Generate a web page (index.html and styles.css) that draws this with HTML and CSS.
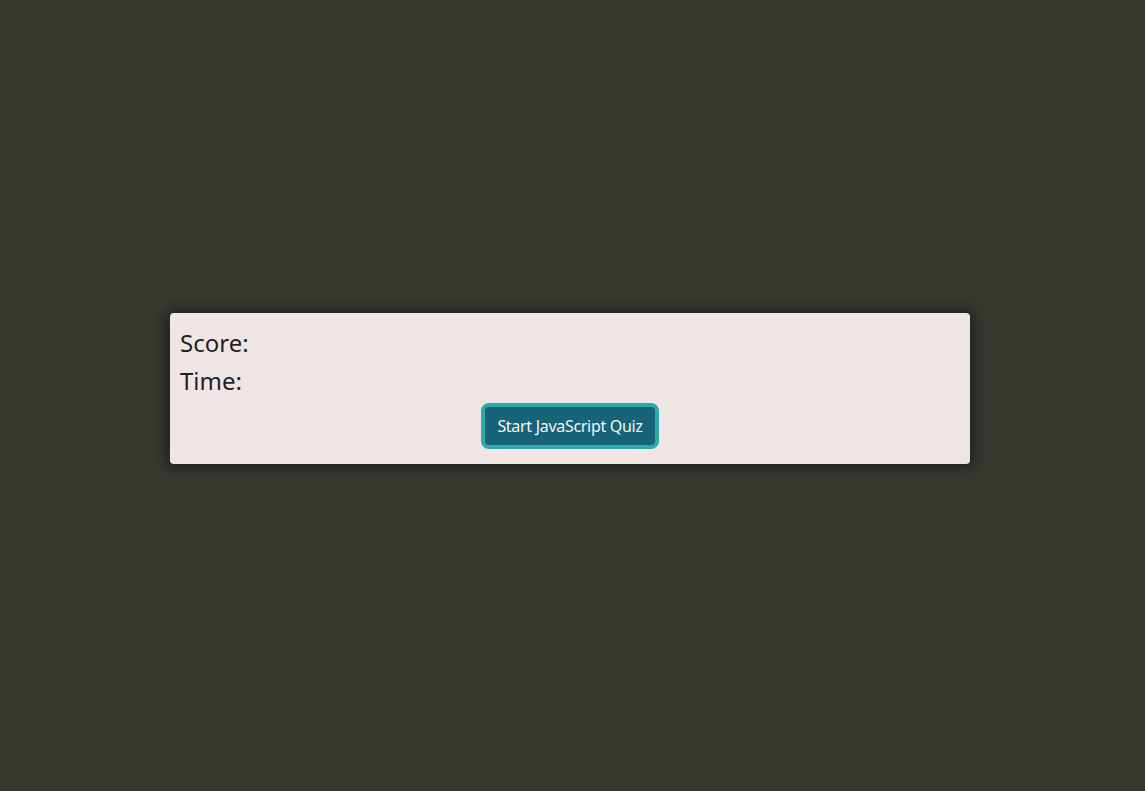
FILE: index.html
```html
<!DOCTYPE html>
<html lang="en">
<head>
<meta charset="utf-8">
<title>JavaScript Quiz</title>
<link rel="stylesheet" href="styles.css">
</head>
<body>
<main class="page">
  <section class="card">
    <div class="stat">Score: <span class="value"></span></div>
    <div class="stat">Time: <span class="value"></span></div>
    <div class="actions">
      <button class="start-btn" type="button">Start JavaScript Quiz</button>
    </div>
  </section>
</main>
</body>
</html>
```

FILE: styles.css
```css
html, body {
  margin: 0;
  padding: 0;
  height: 100%;
}

body {
  background: #373830;
  font-family: "Noto Sans", "Open Sans", sans-serif;
  color: #1f1f24;
}

.page {
  display: flex;
  justify-content: center;
  padding-top: 313px;
  padding-right: 5px;
}

.card {
  width: 800px;
  box-sizing: border-box;
  background: #efe5e4;
  border-radius: 4px;
  box-shadow: 0 0 14px 3px rgba(20, 22, 20, 0.75);
  padding: 11px 10px 15px;
  display: flex;
  flex-direction: column;
}

.stat {
  font-size: 24px;
  line-height: 38px;
}

.actions {
  display: flex;
  justify-content: center;
  margin-top: 3px;
}

.start-btn {
  font-family: "Noto Sans", "Open Sans", sans-serif;
  font-size: 16px;
  letter-spacing: -0.3px;
  color: #f4f4f4;
  background: #176479;
  border: 4px solid #2fa8aa;
  border-radius: 8px;
  height: 46px;
  padding: 0 12px;
  cursor: pointer;
}
```
